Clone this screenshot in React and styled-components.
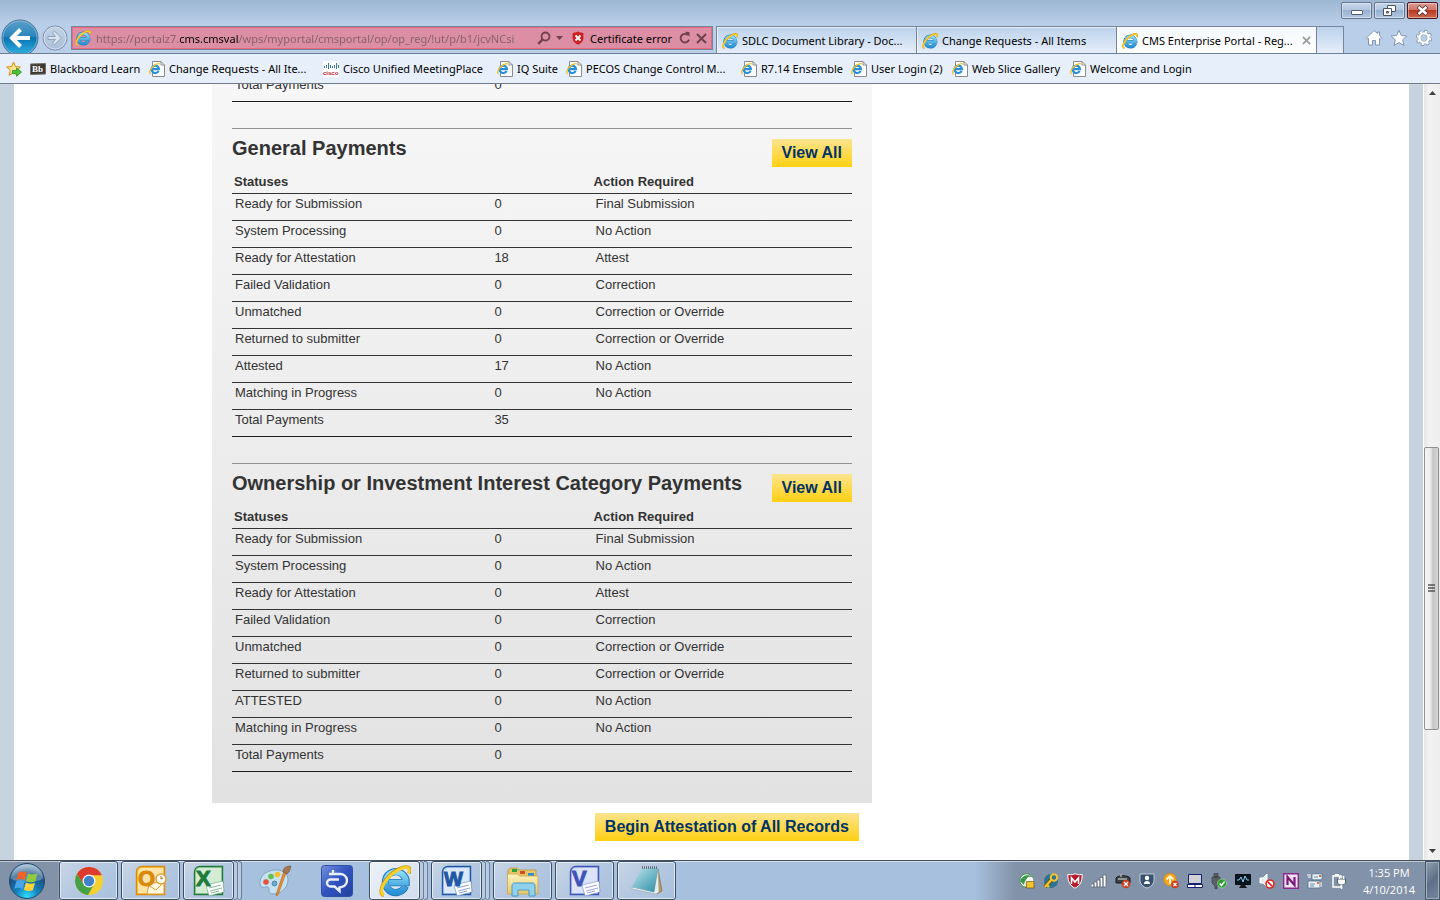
import React from "react";
import styled, { createGlobalStyle } from "styled-components";

const generalRows = [
  ["Ready for Submission", "0", "Final Submission"],
  ["System Processing", "0", "No Action"],
  ["Ready for Attestation", "18", "Attest"],
  ["Failed Validation", "0", "Correction"],
  ["Unmatched", "0", "Correction or Override"],
  ["Returned to submitter", "0", "Correction or Override"],
  ["Attested", "17", "No Action"],
  ["Matching in Progress", "0", "No Action"],
  ["Total Payments", "35", ""],
];

const ownershipRows = [
  ["Ready for Submission", "0", "Final Submission"],
  ["System Processing", "0", "No Action"],
  ["Ready for Attestation", "0", "Attest"],
  ["Failed Validation", "0", "Correction"],
  ["Unmatched", "0", "Correction or Override"],
  ["Returned to submitter", "0", "Correction or Override"],
  ["ATTESTED", "0", "No Action"],
  ["Matching in Progress", "0", "No Action"],
  ["Total Payments", "0", ""],
];

/* ---------- icons ---------- */

const Gradients = () => (
  <StDefs aria-hidden="true">
    <defs>
      <linearGradient id="ieBlue" x1="0" y1="0" x2="0" y2="1">
        <stop offset="0" stopColor="#8fdcf8" />
        <stop offset="1" stopColor="#2a92d6" />
      </linearGradient>
      <linearGradient id="backBlue" x1="0" y1="0" x2="0" y2="1">
        <stop offset="0" stopColor="#5d9fc9" />
        <stop offset="0.45" stopColor="#2a87bd" />
        <stop offset="0.5" stopColor="#0a74b2" />
        <stop offset="1" stopColor="#35b4e4" />
      </linearGradient>
      <linearGradient id="fwdGray" x1="0" y1="0" x2="0" y2="1">
        <stop offset="0" stopColor="#c3d3e6" />
        <stop offset="1" stopColor="#a9bfd8" />
      </linearGradient>
      <radialGradient id="orb" cx="0.5" cy="0.95" r="0.9">
        <stop offset="0" stopColor="#2fe0ff" />
        <stop offset="0.35" stopColor="#1585c0" />
        <stop offset="0.75" stopColor="#1b4f80" />
        <stop offset="1" stopColor="#8fb0cc" />
      </radialGradient>
      <linearGradient id="comm" x1="0" y1="0" x2="1" y2="1">
        <stop offset="0" stopColor="#7593e0" />
        <stop offset="0.5" stopColor="#2f52bd" />
        <stop offset="1" stopColor="#2341a0" />
      </linearGradient>
      <linearGradient id="folder" x1="0" y1="0" x2="0" y2="1">
        <stop offset="0" stopColor="#fdf3bf" />
        <stop offset="1" stopColor="#e8c768" />
      </linearGradient>
      <linearGradient id="note" x1="0" y1="0" x2="1" y2="1">
        <stop offset="0" stopColor="#bfe6ec" />
        <stop offset="1" stopColor="#2c8ea6" />
      </linearGradient>
    </defs>
  </StDefs>
);

const IeLogo = ({ size = 16 }) => (
  <svg width={size} height={size} viewBox="0 0 16 16" fill="none">
    <path d="M13.2 10.6A5.2 5.2 0 1 1 13.6 8.8H5.2" stroke="#1f78b8" strokeWidth="3.6" />
    <path d="M13 10.8A5.1 5.1 0 1 1 13.5 8.8H5" stroke="url(#ieBlue)" strokeWidth="2.8" />
    <path
      d="M2.4 15.2C.4 14.6.6 11 4 6.8 7.6 2.4 12.8.2 14.7 1.3c.8.5.8 1.7.3 2.9"
      stroke="#c99a12"
      strokeWidth="1.8"
    />
    <path
      d="M2.4 15.1C.6 14.5.8 11 4.2 6.9 7.7 2.6 12.7.5 14.5 1.4c.7.4.7 1.5.3 2.6"
      stroke="#fbcf2c"
      strokeWidth="1.4"
    />
  </svg>
);

const IePage = () => (
  <svg width="16" height="16" viewBox="0 0 16 16" fill="none">
    <path d="M3.5.5H12L15.5 4v11.5h-12z" fill="#fff" stroke="#8b8b8b" />
    <path d="M12 .5V4h3.5" stroke="#8b8b8b" />
    <path d="M9.6 10A3.7 3.7 0 1 1 10 8.2H3.2" stroke="#2a8fd6" strokeWidth="2.2" />
    <path d="M1.6 13C-.2 12 .8 8.5 4 5.6 6.5 3.4 9.5 2.2 10.8 3" stroke="#f5c11e" strokeWidth="1.3" />
  </svg>
);

const BackIcon = () => (
  <svg width="38" height="38" viewBox="0 0 38 38" fill="none">
    <circle cx="19" cy="19" r="18" fill="url(#backBlue)" stroke="#4b6f8e" />
    <circle cx="19" cy="19" r="17" stroke="#9fcbe4" strokeOpacity="0.6" />
    <path d="M29 19H11.5M19.5 10.5 11 19l8.5 8.5" stroke="#fff" strokeWidth="4" />
  </svg>
);

const ForwardIcon = () => (
  <svg width="26" height="26" viewBox="0 0 26 26" fill="none">
    <circle cx="13" cy="13" r="12" fill="url(#fwdGray)" stroke="#74879f" />
    <circle cx="13" cy="13" r="11" stroke="#d4e1f0" />
    <path
      d="M6 11.500h7.500L10.500 8l2-1.800 7 6.800-7 6.800-2-1.800 3-3.500H6z"
      fill="#d9e4f1"
      stroke="#8195ad"
      strokeWidth="0.8"
    />
  </svg>
);

const SearchIcon = () => (
  <svg width="14" height="14" viewBox="0 0 14 14" fill="none" stroke="#71404f">
    <circle cx="8.5" cy="5.5" r="4" strokeWidth="1.8" />
    <path d="M5.5 8.5 1.2 12.8" strokeWidth="2.4" />
  </svg>
);

const CertIcon = () => (
  <svg width="12" height="14" viewBox="0 0 12 14">
    <path d="M6 .8c1.500 1 3 1.400 5 1.400v5c0 3-2 4.900-5 6-3-1.100-5-3-5-6v-5c2 0 3.500-.4 5-1.400z" fill="#d81e1e" stroke="#a91212" strokeWidth="0.6" />
    <path d="m3.5 4.500 5 5m0-5-5 5" stroke="#fff" strokeWidth="1.8" />
  </svg>
);

const RefreshIcon = () => (
  <svg width="12" height="14" viewBox="0 0 12 14" fill="none">
    <path d="M9 4.2A4.3 4.3 0 1 0 10 8.6" stroke="#71404f" strokeWidth="1.9" />
    <path d="M5.8.8 10.5 1v4.7z" fill="#71404f" />
  </svg>
);

const CrossIcon = ({ size = 11, color = "#71404f" }) => (
  <svg width={size} height={size} viewBox="0 0 11 11">
    <path d="m1 1 9 9M10 1l-9 9" stroke={color} strokeWidth="2" />
  </svg>
);

const HomeIcon = () => (
  <svg width="18" height="18" viewBox="0 0 18 18">
    <path
      d="M9 1.5 1.5 9l1 1.2 1-.7V16h4v-4.5h3V16h4V9.5l1 .7 1-1.2-2-2.500V3h-2v1.500z"
      fill="#fff"
      stroke="#8095b0"
    />
  </svg>
);

const StarIcon = () => (
  <svg width="18" height="18" viewBox="0 0 18 18">
    <path d="m9 1.2 2.3 5.3 5.6.5-4.2 3.8 1.3 5.7L9 13.5 4 16.500l1.300-5.700L1.100 7l5.600-.5z" fill="#fff" stroke="#8095b0" />
  </svg>
);

const GearIcon = () => (
  <svg width="18" height="18" viewBox="0 0 18 18" fill="none">
    <circle cx="9" cy="9" r="6.6" stroke="#8095b0" strokeWidth="3.2" strokeDasharray="3 2.18" />
    <circle cx="9" cy="9" r="4.7" stroke="#8095b0" strokeWidth="3.6" />
    <circle cx="9" cy="9" r="6.3" stroke="#fff" strokeWidth="2" strokeDasharray="2.2 2.75" />
    <circle cx="9" cy="9" r="4.6" stroke="#fff" strokeWidth="2.4" />
  </svg>
);

const AddFavoriteIcon = () => (
  <svg width="16" height="16" viewBox="0 0 16 16">
    <path d="m7.5 1 2 4.6 5 .4-3.800 3.300 1.200 5-4.400-2.700-4.400 2.700 1.200-5L.7 6l4.900-.4z" fill="#fde58a" stroke="#d38a12" />
    <path d="M6.5 9.5h4V7l5 4-5 4.300v-2.600h-4z" fill="#4fc23c" stroke="#2a8a1c" strokeWidth="0.8" />
  </svg>
);

const BlackboardIcon = () => (
  <svg width="16" height="16" viewBox="0 0 16 16">
    <path d="m.5 3 15-.5V13l-15 .5z" fill="#3b3936" stroke="#756d63" />
    <text x="2" y="11" fontFamily="Liberation Serif, serif" fontWeight="700" fontSize="9" fill="#fff">Bb</text>
  </svg>
);

const CiscoIcon = () => (
  <svg width="16" height="16" viewBox="0 0 16 16">
    <path fill="#fff" d="M0 0h16v16H0z" />
    <path d="M1.5 5v2M3.5 4v3M5.5 2v6M7.5 4v3M9.5 5v2M11.5 4v3M13.5 2v6M15.5 4v3" stroke="#3a7a94" />
    <text x="0" y="14" fontFamily="Liberation Sans, sans-serif" fontWeight="700" fontSize="6" fill="#b1182c">cisco</text>
  </svg>
);

const StartIcon = () => (
  <svg width="38" height="38" viewBox="0 0 38 38">
    <circle cx="19" cy="19" r="17.5" fill="url(#orb)" stroke="#23486b" />
    <path d="M3 17a16 14.5 0 0 1 32 0c-8 4-24 4-32 0z" fill="#fff" opacity="0.28" />
    <path d="M10.5 10.5c2.800-1.500 5.600-1.400 8.200.1l-1.900 7.600c-2.800-1.500-5.500-1.500-8.300-.2z" fill="#f0622a" />
    <path d="M20 11.300c2.900 1.600 6 1.700 9.500.3l-2.200 7.700c-3 1.400-5.900 1.200-9.100-.4z" fill="#8fcb3c" />
    <path d="M8.200 19.500c2.800-1.400 5.500-1.400 8.300.2l-1.900 7.200c-2.700-1.500-5.300-1.600-8.300-.2z" fill="#4aa5ec" />
    <path d="M17.900 20.500c2.900 1.500 5.900 1.700 9.100.5l-2.100 7.300c-3 1.300-6 1-9-.6z" fill="#ffd23a" />
  </svg>
);

const ChromeIcon = () => (
  <svg width="30" height="30" viewBox="0 0 30 30">
    <circle cx="15" cy="15" r="14" fill="#f6cf2f" />
    <path d="M2.900 8A14 14 0 0 1 27.800 9.300H15L9.300 18z" fill="#dc3a2c" />
    <path d="M2.900 8A14 14 0 0 0 14 29l6.200-11-5.200 3-5.500-3z" fill="#44a148" />
    <circle cx="15" cy="15" r="6.5" fill="#f4f4f4" />
    <circle cx="15" cy="15" r="5.2" fill="#4082c8" />
  </svg>
);

const OfficeIcon = ({ letter, color, light, size = 22 }) => (
  <svg width="32" height="32" viewBox="0 0 32 32">
    <path d="M7 1.500h22.500v28h-28V7c0-3 2-5.500 5.500-5.500z" fill={light} stroke={color} strokeWidth="1.4" />
    <path d="M8 3h20v25H3V8c0-3 2-5 5-5z" fill="#fff" opacity="0.5" />
    {letter === "O" ? (
      <>
        <path d="m14 19 15-3v13H12z" fill="#fff8e2" stroke="#e0a032" />
        <path d="m13 20 8 5 8-8" fill="none" stroke="#e0a032" />
        <circle cx="26" cy="14" r="5" fill="#fff" stroke="#e8a22b" strokeWidth="1.5" />
        <path d="M26 11v3l2-1" fill="none" stroke="#a86b12" />
      </>
    ) : (
      <>
        <path d="m13 20 17-4 1 11-15 4z" fill="#fff" stroke={color} strokeOpacity="0.4" />
        <path d="m16 23 12-3M17 26l12-3M18 28l8-2" stroke={color} strokeOpacity="0.55" />
      </>
    )}
    <text x="3" y="21" fontFamily="Liberation Sans, sans-serif" fontWeight="700" fontSize={size} fill={color} stroke={color}>
      {letter}
    </text>
  </svg>
);

const PaintIcon = () => (
  <svg width="34" height="34" viewBox="0 0 34 34">
    <path d="M16 6C7 7 1 13 2 20c.3 3 3 4 5.500 3 2.500-1 4 1 3.500 3.500-.4 3 4 4 8 3 7-1.500 11-8 11-14S24 5 16 6z" fill="#c5e2f2" stroke="#7aa5c1" />
    <circle cx="8" cy="18" r="2.8" fill="#e5513b" />
    <circle cx="13" cy="12.5" r="2.8" fill="#69bd4c" />
    <circle cx="19.5" cy="10.5" r="2.8" fill="#f2c02c" />
    <circle cx="16.5" cy="19.5" r="2.4" fill="#6fa9cf" stroke="#4c84a9" />
    <path d="m28 9-8 22-2 1 .5-3L26 7z" fill="#e58d35" stroke="#b3651b" strokeWidth="0.6" />
    <path d="M25 8c0-4 3-6 8-6-1 3-1 6-4 8z" fill="#a57350" stroke="#7b5238" strokeWidth="0.6" />
  </svg>
);

const CommunicatorIcon = () => (
  <svg width="32" height="32" viewBox="0 0 32 32" fill="none">
    <rect x="0.5" y="0.5" width="31" height="31" rx="3" fill="url(#comm)" stroke="#3150a4" />
    <path
      d="M8 9h11a6.500 6.500 0 0 1 2 12.800l-2.500.7v3.500L13.500 21.500H9.500a3.500 3.500 0 0 1 0-7H18M12 5v5"
      stroke="#e8f0ff"
      strokeWidth="2.4"
    />
  </svg>
);

const ExplorerIcon = () => (
  <svg width="34" height="32" viewBox="0 0 34 32">
    <path d="M4 3h7l1 2h18v22H2V5z" fill="#e6c667" stroke="#b9943a" strokeWidth="0.8" />
    <path d="M6 4h5v3H6z" fill="#2da33d" />
    <path d="M14 6h5v3h-5z" fill="#d5492f" />
    <path d="M22 8h6v3h-6z" fill="#2f8fd2" />
    <path d="M1.5 9h10l2 2H32v18H1.500z" fill="url(#folder)" stroke="#c9a54a" strokeWidth="0.8" />
    <path d="M6 31V21c0-2 1-3 3-3h17c2 0 3 1 3 3v10h-6v-6H12v6z" fill="#8fd0ec" stroke="#4b98c2" />
  </svg>
);

const NotepadIcon = () => (
  <svg width="34" height="32" viewBox="0 0 34 32">
    <path d="m28 4 4 22-5 3-4-5z" fill="#b89759" stroke="#7d6436" strokeWidth="0.6" />
    <path d="m24 27 4-23 1 23-3 2-24-5v-2z" fill="#e7eef0" stroke="#90a5ab" strokeWidth="0.6" />
    <path d="M12 3h16l-4 24-22-5z" fill="url(#note)" />
    <path d="M12 2.500h16" stroke="#626b70" strokeWidth="2.4" strokeDasharray="1 1" />
  </svg>
);

const trayIcons = {
  VPN: (
    <>
      <circle cx="7.5" cy="7.5" r="6.8" fill="#e9f2e8" stroke="#4b8c52" />
      <path d="M1 8C3 2 10 1 13 4 9 4 6 6 5 12z" fill="#3f9850" />
      <path d="M8.500 9V7a2.500 2.500 0 0 1 5 0v2" fill="none" stroke="#fff" strokeWidth="1.5" />
      <path d="M7.500 8.500h7.500V15H7.500z" fill="#f4c32f" stroke="#55440c" strokeWidth="0.6" />
    </>
  ),
  Credentials: (
    <>
      <circle cx="8" cy="8" r="7" fill="#2f7391" />
      <path d="m2 14 7-8" stroke="#6b4b06" strokeWidth="4" />
      <path d="m2 14 7-8M4 12l2 2" stroke="#f6c32c" strokeWidth="2.4" />
      <circle cx="11" cy="4.5" r="3.2" fill="none" stroke="#f6c32c" strokeWidth="2" />
    </>
  ),
  Antivirus: (
    <>
      <path d="M.8 1.500C5 2 6 1.500 8 .8c2 .7 3 1.200 7.200.7 0 7-2 11-7.200 13.700C2.800 12.500.8 8.500.8 1.500z" fill="#b51d2c" stroke="#fff" />
      <path d="M4.500 11V5L8 9l3.500-4v6" fill="none" stroke="#fff" strokeWidth="1.6" />
    </>
  ),
  Network: (
    <path d="M0 11h3v3H0zM3 9h3v5H3zM6 7h3v7H6zM9 4.500h3V14H9zM12 2h3v12h-3z" fill="#fff" stroke="#5b6878" strokeWidth="0.8" />
  ),
  Device: (
    <>
      <path d="M1 5c2-3 12-3 14 0v5H1z" fill="#3e4348" stroke="#171a1d" />
      <path d="M3 6h9M6 1v3" stroke="#adb3b8" strokeWidth="1.5" />
      <circle cx="11" cy="11" r="4.3" fill="#cb3f23" />
      <path d="m9 9 4 4m0-4-4 4" stroke="#fff" strokeWidth="1.3" />
    </>
  ),
  Security: (
    <>
      <path d="M1 1h14v6c0 4-3 7-7 8-4-1-7-4-7-8z" fill="#38516f" stroke="#d9e2eb" strokeWidth="0.8" />
      <circle cx="8" cy="5" r="2.2" fill="#fff" />
      <path d="M5 11c0-2 1-3 3-3s3 1 3 3z" fill="#fff" />
    </>
  ),
  Updates: (
    <>
      <circle cx="7" cy="6.5" r="6.3" fill="#f5a51c" stroke="#d98209" strokeWidth="0.6" />
      <path d="M7 11V3M3.500 6.500 7 3l3.500 3.500" fill="none" stroke="#fff4d0" strokeWidth="1.9" />
      <circle cx="12" cy="11.5" r="3.8" fill="#cd3d22" />
      <path d="m10.500 10 3 3m0-3-3 3" stroke="#fff" strokeWidth="1.2" />
    </>
  ),
  Touchpad: (
    <>
      <path d="M1.500 1.500h13v9h-13z" fill="#d0d2d5" stroke="#14206b" />
      <path d="M.5 11.500h15v3H.5zM8 11v4" fill="#fff" stroke="#14206b" />
    </>
  ),
  Hardware: (
    <>
      <path d="M3 0h4v4H3zM1 4h8v6l-3 3v3H4v-3l-3-3z" fill="#596066" stroke="#32373b" strokeWidth="0.6" />
      <circle cx="11" cy="10.5" r="4.5" fill="#2d9c31" stroke="#d4ead4" strokeWidth="0.5" />
      <path d="m8.700 10.500 1.800 2 3-4" fill="none" stroke="#fff" strokeWidth="1.5" />
    </>
  ),
  Display: (
    <>
      <path d="M.5 1.500h15v10H.5z" fill="#071521" stroke="#0b0e12" />
      <path d="M2 7h2l2-3 2 5 2-6 2 4h2" fill="none" stroke="#90cbed" />
      <path d="M6 12h4l2 3H4z" fill="#15191e" />
    </>
  ),
  Volume: (
    <>
      <path d="M1 5h3l4-4v13l-4-4H1z" fill="#e6ebef" stroke="#fff" />
      <circle cx="11" cy="11" r="4" fill="#fff" stroke="#d82c22" strokeWidth="1.6" />
      <path d="m8.200 8.200 5.600 5.600" stroke="#d82c22" strokeWidth="1.6" />
    </>
  ),
  OneNote: (
    <>
      <path d="M.7.7h14.600v14.600H.7z" fill="#f2e4f2" stroke="#8c2a8b" strokeWidth="1.4" />
      <path d="M4.500 12V4l7 8V4" fill="none" stroke="#7b187b" strokeWidth="2.2" />
    </>
  ),
  Mail: (
    <>
      <path d="M5 .8h10v6H5zM1 8h12v7H1z" fill="#e9f1f7" stroke="#4e7290" strokeWidth="0.8" />
      <path d="M0 2h4M1 4h3M14 9v5" stroke="#fff" />
      <path d="M7 4h4M3 11h5M3 13h4" stroke="#6c8cab" />
      <path d="M12 2h2v2h-2zM10 9h2v2h-2z" fill="#e16b32" />
    </>
  ),
  Power: (
    <>
      <path d="M2 3h8v11H2z" fill="none" stroke="#fff" strokeWidth="1.5" />
      <path d="M4 1h4v2H4z" fill="#fff" />
      <path d="M6.500 6h8v3c0 2-1.500 3-4 3s-4-1-4-3z" fill="#fff" stroke="#4e5b69" />
      <path d="M8.500 3v3M12.500 3v3M10.500 12v4" stroke="#fff" strokeWidth="1.5" />
    </>
  ),
};

/* ---------- data for the browser chrome and the taskbar ---------- */

const favorites = [
  { label: "Blackboard Learn", icon: <BlackboardIcon />, width: 119 },
  { label: "Change Requests - All Ite...", width: 174 },
  { label: "Cisco Unified MeetingPlace", icon: <CiscoIcon />, width: 174 },
  { label: "IQ Suite", width: 69 },
  { label: "PECOS Change Control M...", width: 175 },
  { label: "R7.14 Ensemble", width: 110 },
  { label: "User Login (2)", width: 101 },
  { label: "Web Slice Gallery", width: 118 },
  { label: "Welcome and Login", width: 140 },
];

const tasks = [
  { name: "Chrome", icon: <ChromeIcon /> },
  { name: "Outlook", icon: <OfficeIcon letter="O" color="#d98a0c" light="#fbc94f" /> },
  { name: "Excel", icon: <OfficeIcon letter="X" color="#1f7a3c" light="#a9d6a9" />, stacked: true },
  { name: "Paint", icon: <PaintIcon />, idle: true },
  { name: "Communicator", icon: <CommunicatorIcon />, idle: true },
  { name: "Internet Explorer", icon: <IeLogo size={32} />, stacked: true, active: true },
  { name: "Word", icon: <OfficeIcon letter="W" color="#1d57a5" light="#b5d0f2" size={20} />, stacked: true },
  { name: "Windows Explorer", icon: <ExplorerIcon /> },
  { name: "Visio", icon: <OfficeIcon letter="V" color="#3f55b5" light="#b9c6f2" /> },
  { name: "Notepad", icon: <NotepadIcon /> },
];

const PaymentSection = ({ title, rows }) => (
  <StSection>
    <StSectionHeader>
      <StTitle>{title}</StTitle>
      <StGoldButton>View All</StGoldButton>
    </StSectionHeader>
    <StTable>
      <StColumns />
      <thead>
        <tr>
          <StTh>Statuses</StTh>
          <StTh aria-label="Count" />
          <StTh>Action Required</StTh>
        </tr>
      </thead>
      <tbody>
        {rows.map((row) => (
          <PaymentRow key={row[0]} row={row} />
        ))}
      </tbody>
    </StTable>
  </StSection>
);

const StColumns = () => (
  <colgroup>
    <StCol $width="42%" />
    <StCol $width="16%" />
    <StCol $width="42%" />
  </colgroup>
);

const PaymentRow = ({ row }) => (
  <StTr>
    {row.map((cell, i) => (
      <StTd key={i}>{cell}</StTd>
    ))}
  </StTr>
);

const App = () => {
  return (
    <StWindow>
      <GlobalStyle />
      <Gradients />
      <StChrome>
        <StTitleBar>
          <StWindowButton aria-label="Minimize">
            <svg width="12" height="11" viewBox="0 0 12 11">
              <rect x="0.5" y="5.5" width="11" height="4" rx="0.5" fill="#fff" stroke="#55606f" />
            </svg>
          </StWindowButton>
          <StWindowButton aria-label="Restore">
            <svg width="13" height="11" viewBox="0 0 13 11" fill="#fff" stroke="#4b5665">
              <path d="M4.5.5h8v6h-8z" />
              <path d="M.5 3.500h8v7h-8z" />
              <path d="M3.5 6.500h2v1.500h-2z" fill="#8fa5c0" />
            </svg>
          </StWindowButton>
          <StWindowButton aria-label="Close" $danger>
            <svg width="13" height="11" viewBox="0 0 13 11">
              <path d="m2 1.500 9 8m0-8-9 8" stroke="#533" strokeWidth="4" />
              <path d="m2.500 2 8 7m0-7-8 7" stroke="#fff" strokeWidth="2.4" />
            </svg>
          </StWindowButton>
        </StTitleBar>
        <StNavRow>
          <StNavButton aria-label="Back"><BackIcon /></StNavButton>
          <StNavButton aria-label="Forward"><ForwardIcon /></StNavButton>
          <StAddressBar>
            <IeLogo />
            <StUrl
              aria-label="Address"
              defaultValue="https://portalz7.cms.cmsval/wps/myportal/cmsportal/op/op_reg/!ut/p/b1/jcvNCsi"
            />
            <StPlainButton aria-label="Search"><SearchIcon /></StPlainButton>
            <StPlainButton aria-label="Address list">
              <svg width="7" height="4" viewBox="0 0 7 4"><path d="M0 0h7L3.5 4z" fill="#71404f" /></svg>
            </StPlainButton>
            <StCertificate><CertIcon />Certificate error</StCertificate>
            <StPlainButton aria-label="Refresh"><RefreshIcon /></StPlainButton>
            <StPlainButton aria-label="Stop"><CrossIcon /></StPlainButton>
          </StAddressBar>
          <StTabs role="tablist">
            <StTab role="tab"><IeLogo /><span>SDLC Document Library - Doc...</span></StTab>
            <StTab role="tab"><IeLogo /><span>Change Requests - All Items</span></StTab>
            <StTab role="tab" aria-selected="true" $active>
              <IeLogo />
              <span>CMS Enterprise Portal - Reg...</span>
              <CrossIcon size={9} color="#9a9a9a" />
            </StTab>
            <StNewTab aria-label="New tab" />
          </StTabs>
          <StTools>
            <StPlainButton aria-label="Home"><HomeIcon /></StPlainButton>
            <StPlainButton aria-label="Favorites"><StarIcon /></StPlainButton>
            <StPlainButton aria-label="Tools"><GearIcon /></StPlainButton>
          </StTools>
        </StNavRow>
        <StFavorites>
          <StPlainButton aria-label="Add to favorites"><AddFavoriteIcon /></StPlainButton>
          <StFavoriteList>
            {favorites.map((item) => (
              <StFavorite key={item.label} href="#" $width={item.width}>
                {item.icon || <IePage />}
                {item.label}
              </StFavorite>
            ))}
          </StFavoriteList>
        </StFavorites>
      </StChrome>

      <StViewport>
        <StPage>
          <StPanel>
            <StTable>
              <StColumns />
              <tbody>
                <PaymentRow row={["Total Payments", "0", ""]} />
              </tbody>
            </StTable>
            <PaymentSection title="General Payments" rows={generalRows} />
            <PaymentSection title="Ownership or Investment Interest Category Payments" rows={ownershipRows} />
          </StPanel>
          <StActions>
            <StGoldButton>Begin Attestation of All Records</StGoldButton>
          </StActions>
        </StPage>
        <StScrollbar>
          <StPlainButton aria-label="Scroll up">
            <svg width="7" height="4" viewBox="0 0 7 4"><path d="M0 4h7L3.5 0z" fill="#404040" /></svg>
          </StPlainButton>
          <StTrack>
            <StThumb>
              <svg width="7" height="9" viewBox="0 0 7 9"><path d="M0 1h7M0 4h7M0 7h7" stroke="#555" strokeWidth="1.5" /></svg>
            </StThumb>
          </StTrack>
          <StPlainButton aria-label="Scroll down">
            <svg width="7" height="4" viewBox="0 0 7 4"><path d="M0 0h7L3.5 4z" fill="#404040" /></svg>
          </StPlainButton>
        </StScrollbar>
      </StViewport>

      <StTaskbar>
        <StStart aria-label="Start"><StartIcon /></StStart>
        <StTasks>
          {tasks.map((task) => (
            <StTaskSlot key={task.name}>
              <StTask aria-label={task.name} $idle={task.idle} $active={task.active}>{task.icon}</StTask>
              {task.stacked && (
                <>
                  <StTaskEdge />
                  <StTaskEdge />
                </>
              )}
            </StTaskSlot>
          ))}
        </StTasks>
        <StTray>
          {Object.entries(trayIcons).map(([name, shape]) => (
            <StPlainButton key={name} aria-label={name}>
              <svg width="16" height="16" viewBox="0 0 16 16">{shape}</svg>
            </StPlainButton>
          ))}
        </StTray>
        <StClock>
          <span>1:35 PM</span>
          <span>4/10/2014</span>
        </StClock>
        <StShowDesktop aria-label="Show desktop" />
      </StTaskbar>
    </StWindow>
  );
};
export default App;

const GlobalStyle = createGlobalStyle`
  * {
    box-sizing: border-box;
  }
  body {
    margin: 0;
    font-family: "Liberation Sans", Arial, sans-serif;
  }
  svg {
    display: block;
    flex: none;
  }
  button {
    font-family: inherit;
    cursor: pointer;
  }
`;

const StDefs = styled.svg`
  position: absolute;
  width: 0;
  height: 0;
`;

const StWindow = styled.div`
  display: flex;
  flex-direction: column;
  height: 100vh;
  overflow: hidden;
  background: #ffffff;
`;

const StChrome = styled.header`
  flex: none;
  font-family: "Noto Sans", "Open Sans", sans-serif;
  font-size: 11px;
  color: #000000;
  background: linear-gradient(#9db6d1, #b9cfe9 24px, #b9cfe9);
`;

const StTitleBar = styled.div`
  display: flex;
  justify-content: flex-end;
  gap: 2px;
  height: 19px;
  padding: 2px 2px 0;
`;

const StWindowButton = styled.button`
  display: flex;
  align-items: center;
  justify-content: center;
  width: 31px;
  height: 17px;
  padding: 0;
  border: 1px solid ${(props) => (props.$danger ? "#4b1520" : "#62748c")};
  border-radius: 2px;
  box-shadow: inset 0 0 0 1px rgba(255, 255, 255, 0.4);
  background: ${(props) =>
    props.$danger
      ? "linear-gradient(#dd9d92, #cf7264 48%, #b83623 50%, #cf6a4c)"
      : "linear-gradient(#c5d6ea, #b0c5de 48%, #98b1d0 50%, #b2c8e2)"};
`;

const StNavRow = styled.nav`
  display: flex;
  align-items: center;
  height: 35px;
  padding: 4px 0 0 1px;
  border-bottom: 1px solid #6b7f99;
  overflow: hidden;
`;

const StPlainButton = styled.button`
  display: flex;
  align-items: center;
  justify-content: center;
  flex: none;
  padding: 0;
  border: none;
  background: none;
`;

const StNavButton = styled(StPlainButton)`
  margin-right: 3px;
`;

const StAddressBar = styled.div`
  display: flex;
  align-items: center;
  flex: 1 1 642px;
  min-width: 0;
  height: 24px;
  margin-right: 3px;
  padding: 0 5px 0 3px;
  gap: 5px;
  border: 1px solid #76859b;
  box-shadow: inset 0 0 0 1px #e5697f;
  background: #dc8ea5;
`;

/* the host part of the address is darker than the rest */
const StUrl = styled.input`
  flex: 1;
  min-width: 0;
  height: 20px;
  padding: 0;
  border: none;
  outline: none;
  font-family: inherit;
  font-size: 11px;
  color: transparent;
  background: linear-gradient(90deg, #84606b 84px, #000000 84px 143px, #84606b 143px);
  -webkit-background-clip: text;
  background-clip: text;
`;

const StCertificate = styled.div`
  display: flex;
  align-items: center;
  gap: 6px;
  padding: 0 2px 0 4px;
  white-space: nowrap;
`;

const StTabs = styled.div`
  display: flex;
  align-self: stretch;
  flex: 1 1 628px;
  min-width: 0;
  padding-top: 3px;
`;

const StTab = styled.button`
  display: flex;
  align-items: center;
  flex: 1;
  min-width: 0;
  gap: 4px;
  padding: 1px 5px 0;
  border: 1px solid #76859b;
  border-bottom: none;
  border-right: none;
  font-size: 11px;
  white-space: nowrap;
  text-align: left;
  color: #000000;
  background: ${(props) => (props.$active ? "linear-gradient(#f4f8fd, #ffffff)" : "linear-gradient(#bcd2eb, #e6eef9)")};
  box-shadow: inset 1px 1px 0 rgba(255, 255, 255, 0.6);

  span {
    flex: 1;
  }
`;

const StNewTab = styled.button`
  width: 28px;
  padding: 0;
  border: 1px solid #76859b;
  border-bottom: none;
  background: linear-gradient(#bcd2eb, #e6eef9);
`;

const StTools = styled.div`
  display: flex;
  gap: 7px;
  padding: 0 7px 0 21px;
`;

const StFavorites = styled.div`
  display: flex;
  align-items: center;
  gap: 8px;
  height: 30px;
  padding: 0 6px;
  border-bottom: 1px solid #6f7c8c;
  background: #e7effa;
`;

const StFavoriteList = styled.div`
  display: flex;
  flex: 1;
  min-width: 0;
`;

const StFavorite = styled.a`
  display: flex;
  align-items: center;
  gap: 4px;
  width: ${(props) => props.$width}px;
  white-space: nowrap;
  text-decoration: none;
  color: #000000;
`;

const StViewport = styled.div`
  display: flex;
  flex: 1;
  min-height: 0;
  overflow: hidden;
`;

/* scrolled down so that the first table shows only its last row */
const StPage = styled.main`
  flex: 1;
  min-width: 0;
  margin-top: -9px;
  padding-left: 198px;
  border: solid #c8d3e0;
  border-width: 0 14px;
  background: #ffffff;
`;

const StPanel = styled.div`
  max-width: 660px;
  padding: 0 20px 31px;
  background: linear-gradient(#f7f7f7, #e2e2e2);
`;

const StSection = styled.section`
  margin-top: 26px;
  border-top: 1px solid #929292;
`;

const StSectionHeader = styled.div`
  display: flex;
  align-items: flex-start;
  justify-content: space-between;
  height: 39px;
  padding-top: 10px;
`;

const StTitle = styled.h2`
  margin: 0;
  font-size: 20px;
  line-height: 18px;
  color: #333333;
`;

const StGoldButton = styled.button`
  height: 28px;
  padding: 0 10px;
  border: none;
  font-size: 16px;
  font-weight: 700;
  white-space: nowrap;
  color: #003366;
  background: linear-gradient(#fbe48f, #ffd012);
`;

const StTable = styled.table`
  width: 100%;
  table-layout: fixed;
  border-collapse: separate;
  border-spacing: 0;
  font-size: 13px;
  line-height: 16px;
  color: #333333;
`;

const StCol = styled.col`
  width: ${(props) => props.$width};
`;

const StTh = styled.th`
  height: 26px;
  padding: 6px 2px 3px;
  border-bottom: 1px solid #333333;
  text-align: left;
  vertical-align: top;
`;

const StTd = styled.td`
  height: 27px;
  padding: 2px 3px 8px;
  border-bottom: 1px solid #333333;
  vertical-align: top;

  &:nth-child(2) {
    padding-left: 2px;
  }
  &:nth-child(3) {
    padding-left: 4px;
  }
`;

const StTr = styled.tr`
  &:last-child ${StTd} {
    border-bottom-color: #1c1c1c;
  }
`;

const StActions = styled.div`
  display: flex;
  justify-content: flex-end;
  max-width: 647px;
  padding-top: 10px;
`;

const StScrollbar = styled.div`
  display: flex;
  flex-direction: column;
  flex: none;
  width: 17px;
  padding: 7px 0;
  border-left: 1px solid #ffffff;
  background: linear-gradient(90deg, #e6e6e6, #f2f2f2 30%, #eeeeee);
`;

const StTrack = styled.div`
  display: flex;
  flex-direction: column;
  flex: 1;
  padding: 352px 1px 119px 0;
`;

const StThumb = styled.div`
  display: flex;
  flex: 1;
  align-items: center;
  justify-content: center;
  border: 1px solid #8f8f8f;
  border-radius: 2px;
  background: linear-gradient(90deg, #f7f7f7, #e8e8e8 45%, #c6c6c6 60%, #d6d6d6);
`;

const StTaskbar = styled.footer`
  display: flex;
  flex: none;
  height: 40px;
  border-top: 1px solid #44505f;
  box-shadow: inset 0 1px 0 rgba(255, 255, 255, 0.5);
  background: linear-gradient(90deg, #8293a9 58px, #a6c0dd 60px, #a6c0dd calc(100% - 465px), #8293a9 calc(100% - 425px));
`;

const StStart = styled(StPlainButton)`
  width: 54px;
  margin-right: 5px;
`;

const StTasks = styled.div`
  display: flex;
  flex: 1;
  gap: 3px;
  min-width: 0;
`;

const StTaskSlot = styled.div`
  display: flex;
  flex: none;
  width: 59px;
`;

const StTask = styled.button`
  display: flex;
  align-items: center;
  justify-content: center;
  flex: 1;
  height: 39px;
  padding: 0;
  border: 1px solid ${(props) => (props.$idle ? "transparent" : "#3f4f63")};
  border-radius: 3px;
  box-shadow: ${(props) => (props.$idle ? "none" : "inset 0 0 0 1px rgba(255, 255, 255, 0.6)")};
  background: ${(props) =>
    props.$idle
      ? "none"
      : props.$active
      ? "linear-gradient(135deg, #eef3f9, #cfdcec)"
      : "linear-gradient(135deg, #c8d5e6, #b3c7e0 50%, #a9c0dd)"};
`;

const StTaskEdge = styled.div`
  width: 4px;
  border: 1px solid #6b7f98;
  border-left: none;
  border-radius: 0 3px 3px 0;
  background: #b9cbe1;
`;

const StTray = styled.div`
  display: flex;
  align-items: center;
  gap: 8px;
`;

const StClock = styled.div`
  display: flex;
  flex-direction: column;
  align-items: center;
  justify-content: center;
  width: 78px;
  padding-left: 6px;
  font-family: "Open Sans", "Noto Sans", sans-serif;
  font-size: 11px;
  line-height: 17px;
  color: #ffffff;
`;

const StShowDesktop = styled.button`
  width: 15px;
  padding: 0;
  border: 1px solid #4a5868;
  box-shadow: inset 0 0 0 1px #9cabbd;
  background: linear-gradient(135deg, #92a0b2, #5f7086 50%, #78899e);
`;
